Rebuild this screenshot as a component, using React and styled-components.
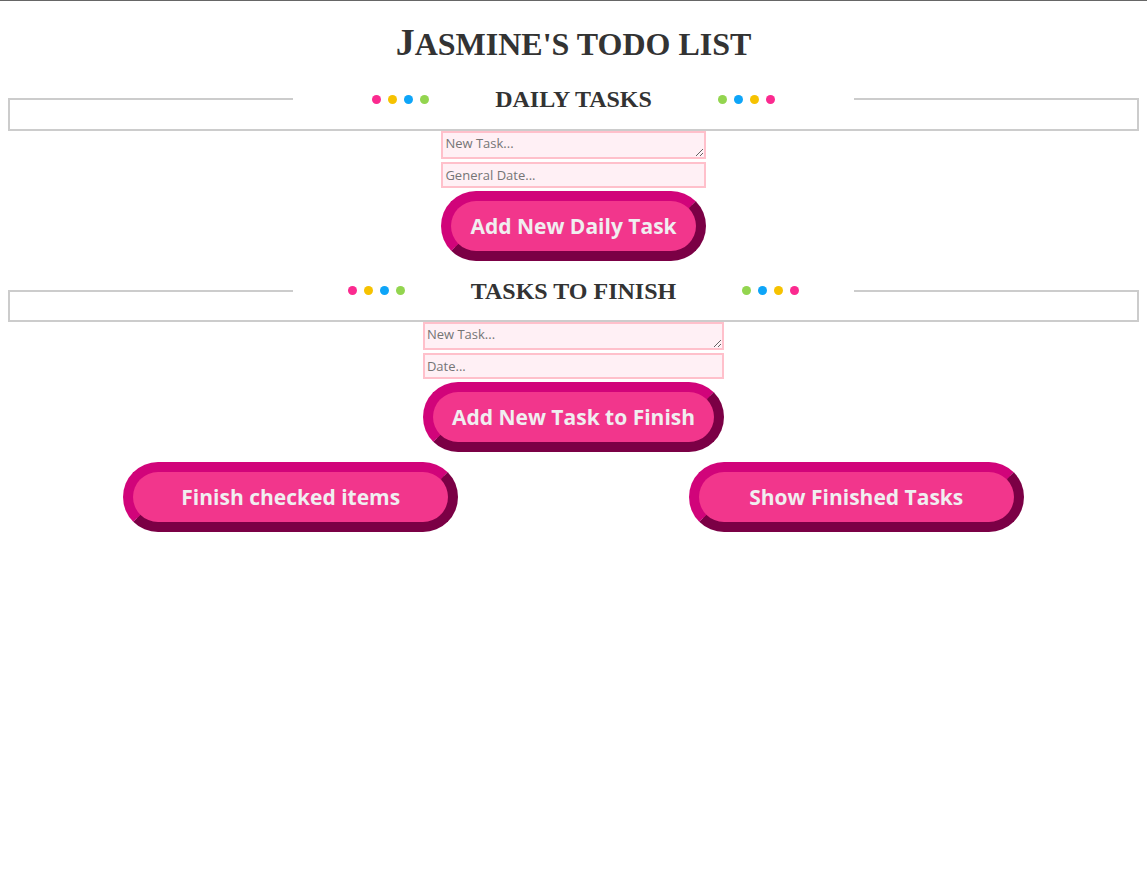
import React from 'react';
import styled, { createGlobalStyle } from 'styled-components';

const Global = createGlobalStyle`
html {
  border-top: 1px solid #666;
}
body {
  margin: 0 8px 8px;
  background: #fff;
  font-family: "Liberation Serif", "Times New Roman", serif;
  color: #333;
}
`;

const Title = styled.h1`
  text-align: center;
  text-transform: uppercase;
  font-size: 32px;
  line-height: 36px;
  margin: 23px 0 23px;
  color: #333;

  &::first-letter {
    font-size: 38px;
  }
`;

const Section = styled.fieldset`
  margin: 0;
  padding: 5.6px 12px 10px;
  border: 2px solid #ccc;
`;

const Legend = styled.legend`
  width: 50%;
  margin: 0 auto;
  padding: 0 5px;
  text-align: center;
  font-size: 24px;
  font-weight: bold;
  color: #333;
  display: flex;
  align-items: center;
  justify-content: center;
  gap: 66px;
  line-height: 28px;
`;

const Dots = styled.span`
  display: inline-flex;
  gap: 7px;
  flex-direction: ${p => (p.reverse ? 'row-reverse' : 'row')};
`;

const Dot = styled.span`
  width: 9px;
  height: 9px;
  border-radius: 50%;
  background: ${p => p.color};
`;

const FormWrap = styled.div`
  display: flex;
  justify-content: center;
  margin: 0 0 16px;
`;

const Form = styled.div`
  display: inline-flex;
  flex-direction: column;
  gap: 3px;
`;

const fieldCss = `
  box-sizing: border-box;
  width: 100%;
  margin: 0;
  border: 2px solid #ffc0cb;
  background: #fff0f5;
  font-family: "Open Sans", "DejaVu Sans", sans-serif;
  font-size: 13px;
  color: #333;
  padding: 1px 2px;
  &::placeholder {
    color: #757575;
  }
`;

const TaskArea = styled.textarea`
  ${fieldCss}
  height: 28px;
  display: block;
`;

const DateInput = styled.input`
  ${fieldCss}
  height: 26px;
`;

const PillButton = styled.button`
  box-sizing: border-box;
  height: 70px;
  width: ${p => p.width || 'auto'};
  padding: 0 19px;
  border: 10px solid;
  border-color: #d1047a #7b0045 #7b0045 #d1047a;
  border-radius: 35px;
  background: #f2368c;
  color: #f0eef0;
  font-family: "Open Sans", "DejaVu Sans", sans-serif;
  font-weight: 700;
  font-size: 21px;
  white-space: nowrap;
  cursor: pointer;
`;

const BottomRow = styled.div`
  display: grid;
  grid-template-columns: 1fr 1fr;
  margin-top: -6px;
`;

const Cell = styled.div`
  display: flex;
  justify-content: center;
`;

const dotColors = ['#fb2a8f', '#f6c200', '#0ea5f8', '#93d54f'];

const DotGroup = ({ reverse }) => (
  <Dots reverse={reverse}>
    {dotColors.map(c => (
      <Dot key={c} color={c} />
    ))}
  </Dots>
);

const TaskSection = ({ title, datePlaceholder, buttonLabel }) => (
  <>
    <Section>
      <Legend>
        <DotGroup />
        <span>{title}</span>
        <DotGroup reverse />
      </Legend>
    </Section>
    <FormWrap>
      <Form>
        <TaskArea placeholder="New Task..." />
        <DateInput placeholder={datePlaceholder} />
        <PillButton>{buttonLabel}</PillButton>
      </Form>
    </FormWrap>
  </>
);

export default function App() {
  return (
    <>
      <Global />
      <Title>Jasmine's todo list</Title>
      <TaskSection
        title="DAILY TASKS"
        datePlaceholder="General Date..."
        buttonLabel="Add New Daily Task"
      />
      <TaskSection
        title="TASKS TO FINISH"
        datePlaceholder="Date..."
        buttonLabel="Add New Task to Finish"
      />
      <BottomRow>
        <Cell>
          <PillButton width="335px">Finish checked items</PillButton>
        </Cell>
        <Cell>
          <PillButton width="335px">Show Finished Tasks</PillButton>
        </Cell>
      </BottomRow>
    </>
  );
}
